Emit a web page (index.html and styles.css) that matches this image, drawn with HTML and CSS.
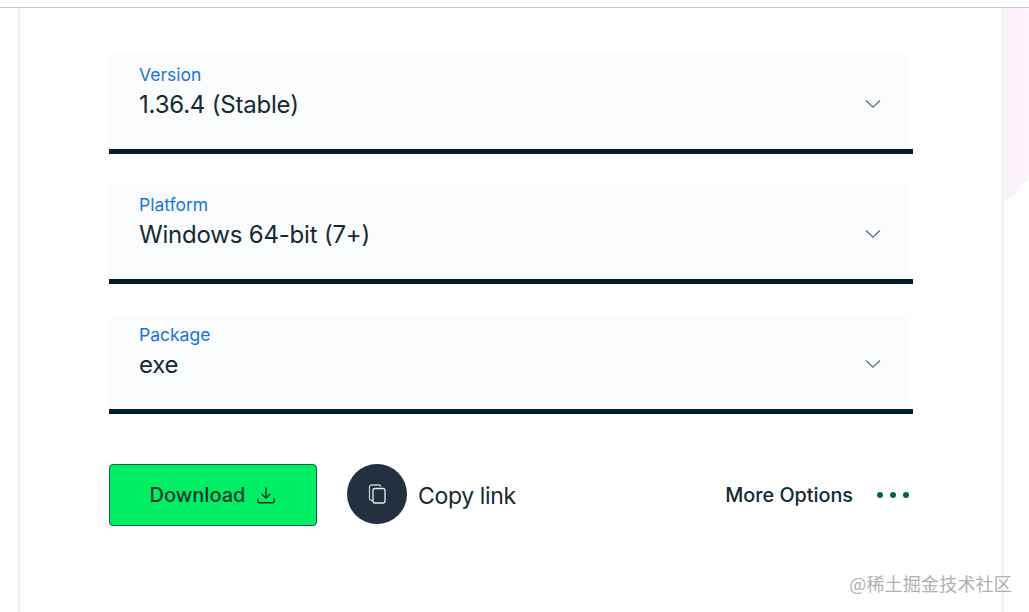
FILE: index.html
```html
<!DOCTYPE html>
<html lang="en">
<head>
<meta charset="utf-8">
<title>Download</title>
<link rel="stylesheet" href="styles.css">
</head>
<body>
<div class="topbar"></div>
<div class="page">
  <main class="card">
    <div class="field">
      <div class="field-body">
        <div class="field-text">
          <span class="field-label">Version</span>
          <span class="field-value">1.36.4 (Stable)</span>
        </div>
        <svg class="chevron" viewBox="0 0 16 10" width="16" height="10"><path d="M1 1.500 8 8.200 15 1.500" fill="none" stroke="#5c6c75" stroke-width="1.300"/></svg>
      </div>
    </div>
    <div class="field">
      <div class="field-body">
        <div class="field-text">
          <span class="field-label">Platform</span>
          <span class="field-value">Windows 64-bit (7+)</span>
        </div>
        <svg class="chevron" viewBox="0 0 16 10" width="16" height="10"><path d="M1 1.500 8 8.200 15 1.500" fill="none" stroke="#5c6c75" stroke-width="1.300"/></svg>
      </div>
    </div>
    <div class="field">
      <div class="field-body">
        <div class="field-text">
          <span class="field-label">Package</span>
          <span class="field-value">exe</span>
        </div>
        <svg class="chevron" viewBox="0 0 16 10" width="16" height="10"><path d="M1 1.500 8 8.200 15 1.500" fill="none" stroke="#5c6c75" stroke-width="1.300"/></svg>
      </div>
    </div>
    <div class="actions">
      <a class="download">
        <span>Download</span>
        <svg viewBox="0 0 20 20" width="20" height="20"><path d="M10 2.500V13M5.800 9 10 13.200 14.200 9M1.800 13.500V16.200A1.500 1.500 0 0 0 3.300 17.700H16.700A1.500 1.500 0 0 0 18.200 16.200V13.500" fill="none" stroke="#0f3a2c" stroke-width="1.500"/></svg>
      </a>
      <a class="copy">
        <span class="copy-circle">
          <svg viewBox="0 0 20 22" width="20" height="22"><path d="M5.500 17.500H4.500A2 2 0 0 1 2.500 15.500V4A2 2 0 0 1 4.500 2H12A2 2 0 0 1 14 3.500" fill="none" stroke="#c3ccd2" stroke-width="1.300"/><rect x="6" y="5.500" width="12" height="14.500" rx="2" fill="none" stroke="#e8edf0" stroke-width="1.300"/></svg>
        </span>
        <span class="copy-text">Copy link</span>
      </a>
      <a class="more">
        <span>More Options</span>
        <span class="dots"><i></i><i></i><i></i></span>
      </a>
    </div>
  </main>
  <aside class="rail"></aside>
</div>
<div class="watermark">@稀土掘金技术社区</div>
</body>
</html>
```

FILE: styles.css
```css
* { box-sizing: border-box; }
html, body { margin: 0; height: 612px; overflow: hidden; background: #fff; }
body { font-family: "Inter", "Liberation Sans", sans-serif; color: #112733; position: relative; }
.topbar { height: 8px; background: #fff; border-bottom: 1px solid #c6c6c6; }
.page { display: flex; height: 604px; padding-left: 18px; }
.card { width: 986px; padding: 46px 90px 0; background: #fff; border-left: 2px solid #f1f1f2; border-right: 3px solid #f3f1f4; }
.field { width: 804px; height: 100px; margin-bottom: 30px; margin-left: -1px; border-bottom: 5px solid #001e2b; }
.field-body { width: 801px; height: 95px; padding: 10px 29px 0 30px; background: #fafcfd; border-radius: 4px 4px 0 0; display: flex; justify-content: space-between; align-items: flex-start; }
.field-text { display: flex; flex-direction: column; }
.field-label { font-size: 17.500px; line-height: 22px; color: #1a73e0; }
.field-value { font-size: 24px; line-height: 38px; letter-spacing: -0.200px; color: #132a33; }
.chevron { margin: 35px 0 0; }
.actions { display: flex; align-items: flex-start; margin-top: 50px; margin-left: -1px; width: 804px; }
.download { width: 208px; height: 62px; display: flex; align-items: center; justify-content: center; gap: 11px; background: #00ed64; border: 1px solid #00684a; border-radius: 4px; font-size: 20px; font-weight: 500; color: #0e3a2c; }
.copy { display: flex; align-items: flex-start; margin-left: 30px; gap: 11px; }
.copy-circle { width: 60px; height: 60px; border-radius: 50%; background: #23303f; display: flex; align-items: center; justify-content: center; }
.copy-text { font-size: 23px; line-height: 64px; letter-spacing: -0.350px; color: #132a33; }
.more { margin-left: auto; height: 62px; display: flex; align-items: center; gap: 24px; font-size: 19.800px; font-weight: 500; color: #0f2a33; padding-right: 4px; }
.dots { display: flex; gap: 7px; }
.dots i { width: 6px; height: 6px; border-radius: 50%; background: #00684a; }
.rail { flex: 1; height: 193px; background: linear-gradient(90deg, #f9f0fb, #fdf4fd); clip-path: polygon(0 0, 100% 0, 100% 88%, 45% 97%, 0 100%); }
.watermark { position: absolute; right: 17px; top: 572px; font-family: "Noto Sans CJK SC", sans-serif; font-size: 18px; line-height: 22px; letter-spacing: 0.200px; color: #b0b0b0; }
```
